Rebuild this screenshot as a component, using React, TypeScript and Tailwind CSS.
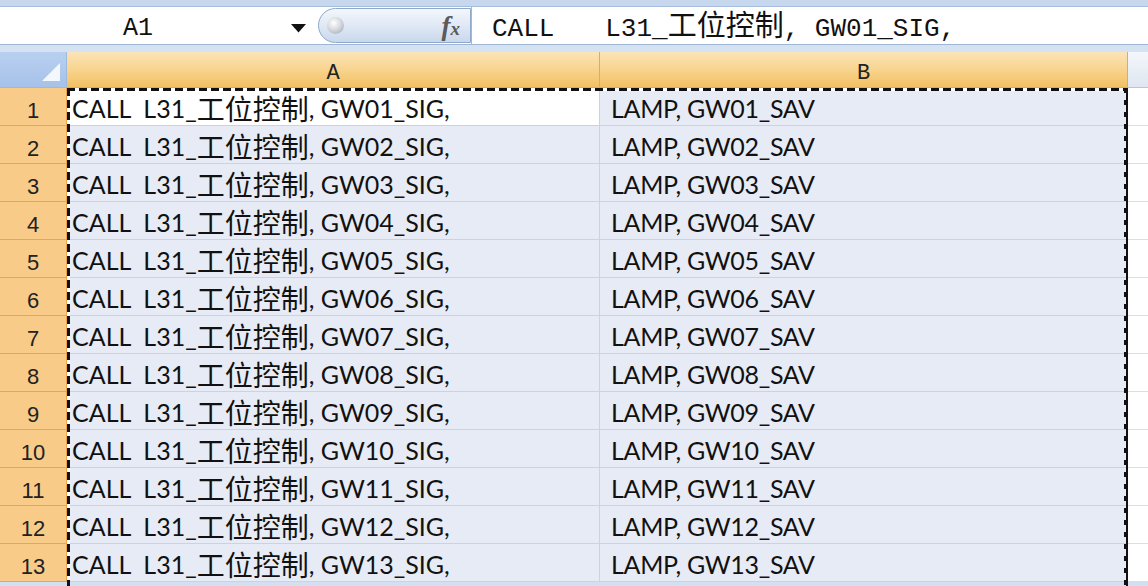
import React from "react";

const rows = Array.from({ length: 13 }, (_, i) => String(i + 1).padStart(2, "0"));

const cellFont = { fontFamily: "Lato, 'Noto Sans CJK SC', sans-serif" };

export default function App() {
  return (
    <div className="relative w-[1148px] h-[586px] overflow-hidden bg-[#d3e0f1] select-none">
      {/* top strip */}
      <div className="h-[7px] bg-[#c6d7ee] border-b border-[#a7bedb]" />
      {/* formula bar */}
      <div className="h-[38px] flex bg-white border-b border-[#9fb6d4]">
        <div className="w-[318px] flex items-center pt-[5px] relative">
          <span
            className="ml-[123px] text-[25px] text-[#111] leading-none"
            style={{ fontFamily: "'Liberation Mono', monospace" }}
          >
            A1
          </span>
          <svg className="absolute left-[291px] top-[17px]" width="15" height="9" viewBox="0 0 15 9">
            <path d="M0 0 H15 L7.5 8.5 Z" fill="#111" />
          </svg>
        </div>
        <div className="w-[153px] my-[1px] rounded-l-[18px] border border-[#8ea9cc] bg-[linear-gradient(180deg,#f4f7fc_0%,#dde7f4_55%,#c9d8ec_100%)] flex items-center relative">
          <div className="ml-[8px] w-[17px] h-[17px] rounded-full bg-[radial-gradient(circle_at_40%_35%,#ffffff_0%,#d6d9de_45%,#9aa3ae_100%)]" />
          <span
            className="absolute right-[10px] top-[0px] text-[27px] italic font-bold text-[#5a5a5a] leading-[34px]"
            style={{ fontFamily: "'Liberation Serif', serif" }}
          >
            f<span className="text-[19px]">x</span>
          </span>
        </div>
        <div className="flex-1 border-l border-[#a3b8d4] flex items-center pl-[20px] pt-[5px]">
          <span
            className="whitespace-pre text-[26px] text-[#111] leading-none"
            style={{ fontFamily: "'Liberation Mono', 'Noto Sans CJK SC', monospace" }}
          >
            {"CALL   "}
            <span className="ml-[4px]">L31_</span>
            <span className="text-[29px]">工位控制</span>
            {", GW01_SIG,"}
          </span>
        </div>
      </div>
      {/* gap strip */}
      <div className="h-[7px] bg-[#d5e2f2]" />
      {/* header row */}
      <div className="flex h-[36px]">
        <div className="w-[67px] relative bg-[linear-gradient(180deg,#b9d0ef,#a6c2ea)] border-r border-b border-[#9db8df]">
          <svg className="absolute right-[6px] bottom-[6px]" width="18" height="18" viewBox="0 0 18 18">
            <path d="M18 0 V18 H0 Z" fill="#f4f8fd" />
          </svg>
        </div>
        {[
          ["A", "w-[533px]"],
          ["B", "w-[528px]"],
        ].map(([l, w]) => (
          <div
            key={l}
            className={`${w} flex items-center justify-center pt-[8px] bg-[linear-gradient(180deg,#fbe4b8_0%,#f8d48e_50%,#f3c064_100%)] border-r border-b border-[#e3ab55] text-[22px] text-[#222]`}
            style={{ fontFamily: "'Liberation Mono', monospace" }}
          >
            {l}
          </div>
        ))}
        <div className="flex-1 bg-[linear-gradient(180deg,#f4f7fb,#dfe6f0)] border-b border-[#b6c6dc]" />
      </div>
      {/* rows */}
      <div className="flex flex-col">
        {rows.map((n, i) => (
          <div key={n} className="flex h-[38px]">
            <div
              className="w-[67px] flex items-center justify-center pt-[7px] bg-[#f9cb89] border-r border-b border-[#eda54c] text-[22px] text-[#222]"
              style={{ fontFamily: "'Liberation Sans', sans-serif" }}
            >
              {i + 1}
            </div>
            <div
              className={`w-[533px] flex items-center pl-[5px] pt-[4px] border-r border-b border-[#c7d3e6] text-[25px] text-[#111] whitespace-pre ${
                i === 0 ? "bg-white" : "bg-[#e7ebf5]"
              }`}
              style={cellFont}
            >
              {"CALL  L31_"}
              <span className="text-[28px] leading-none">工位控制</span>
              {`, GW${n}_SIG,`}
            </div>
            <div
              className="w-[528px] flex items-center pl-[11px] pt-[4px] border-r border-b border-[#c7d3e6] bg-[#e7ebf5] text-[25px] text-[#111] whitespace-pre tracking-[-0.3px]"
              style={cellFont}
            >
              {`LAMP, GW${n}_SAV`}
            </div>
            <div className="flex-1 bg-white border-b border-[#d6dfec]" />
          </div>
        ))}
      </div>
      {/* marching ants selection */}
      <div className="absolute left-[67px] top-[88px] w-[1061px] h-[3px] bg-[repeating-linear-gradient(90deg,#111_0_8px,#fff_8px_12px)]" />
      <div className="absolute left-[67px] top-[88px] w-[3px] h-[498px] bg-[repeating-linear-gradient(180deg,#111_0_8px,#fff_8px_12px)]" />
      <div className="absolute left-[1126px] top-[88px] w-[2px] h-[498px] bg-[#111]" />
      <div className="absolute left-[1124px] top-[88px] w-[2px] h-[498px] bg-[repeating-linear-gradient(180deg,#111_0_5px,transparent_5px_12px)]" />
    </div>
  );
}
